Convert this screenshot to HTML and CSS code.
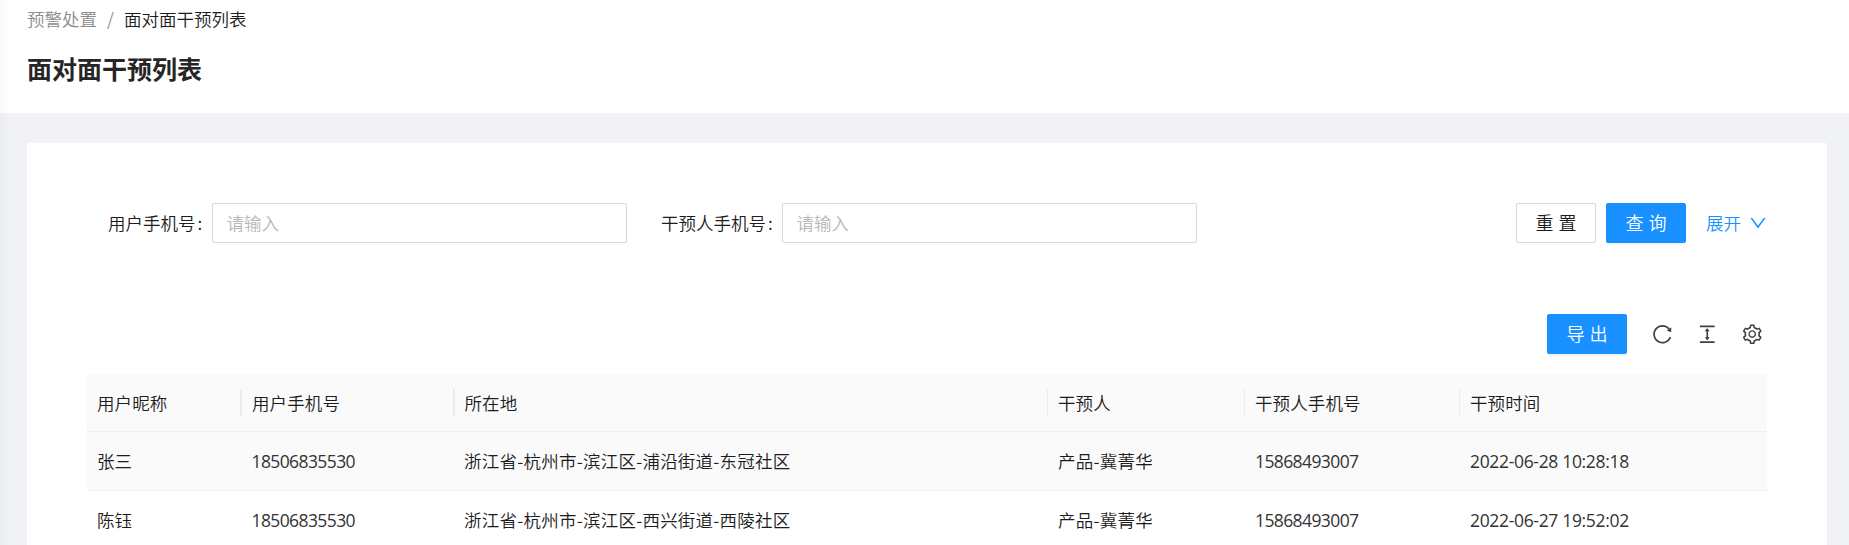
FILE: index.html
```html
<!DOCTYPE html>
<html lang="zh-CN">
<head>
<meta charset="utf-8">
<title>面对面干预列表</title>
<link rel="stylesheet" href="styles.css">
</head>
<body>
<header class="page-header">
  <nav class="breadcrumb"><span class="crumb">预警处置</span><span class="slash">/</span><span class="current">面对面干预列表</span></nav>
  <h1 class="title">面对面干预列表</h1>
</header>
<main class="card">
  <form class="search">
    <label class="label label-first" for="phone">用户手机号<span class="colon">:</span></label>
    <input class="input" id="phone" type="text" placeholder="请输入">
    <label class="label label-second" for="helper">干预人手机号<span class="colon">:</span></label>
    <input class="input" id="helper" type="text" placeholder="请输入">
    <div class="actions">
      <button class="btn" type="button"><span class="btn-text">重置</span></button>
      <button class="btn primary" type="button"><span class="btn-text">查询</span></button>
      <a class="expand">展开<svg class="down" viewBox="0 0 1024 1024"><path d="M884 256h-75c-5.1 0-9.9 2.5-12.9 6.6L512 654.2 227.9 262.6c-3-4.1-7.8-6.6-12.9-6.6h-75c-6.5 0-10.3 7.4-6.5 12.7l352.6 486.1c12.8 17.6 39 17.6 51.7 0l352.6-486.1c3.9-5.3.1-12.7-6.4-12.7z"/></svg></a>
    </div>
  </form>
  <div class="toolbar">
    <button class="btn primary" type="button"><span class="btn-text">导出</span></button>
    <div class="tools">
      <svg class="icon" viewBox="0 0 1024 1024"><path d="M909.1 209.3l-56.4 44.1C775.8 155.1 656.2 92 521.9 92 290 92 102.3 279.5 102 511.5 101.7 743.7 289.8 932 521.9 932c181.3 0 335.8-115 394.6-276.1 1.5-4.2-.7-8.9-4.9-10.3l-56.7-19.5a8 8 0 00-10.1 4.8c-1.8 5-3.8 10-5.9 14.9-17.3 41-42.1 77.8-73.7 109.4A344.77 344.77 0 01655.9 829c-42.3 17.9-87.4 27-133.8 27-46.5 0-91.5-9.1-133.8-27A341.5 341.5 0 01279 755.2a342.16 342.16 0 01-73.7-109.4c-17.9-42.4-27-87.4-27-133.9s9.1-91.5 27-133.9c17.3-41 42.1-77.8 73.7-109.4 31.6-31.6 68.4-56.4 109.3-73.8 42.3-17.9 87.4-27 133.8-27 46.5 0 91.5 9.1 133.8 27a341.5 341.5 0 01109.3 73.8c9.9 9.9 19.2 20.4 27.8 31.4l-60.2 47a8 8 0 003 14.1l175.6 43c5 1.2 9.9-2.6 9.9-7.7l.8-180.9c-.1-6.6-7.8-10.3-13-6.2z"/></svg>
      <svg class="icon" viewBox="0 0 1024 1024"><path d="M840 836H184c-4.4 0-8 3.6-8 8v60c0 4.4 3.6 8 8 8h656c4.4 0 8-3.6 8-8v-60c0-4.4-3.6-8-8-8zm0-724H184c-4.4 0-8 3.6-8 8v60c0 4.4 3.6 8 8 8h656c4.4 0 8-3.6 8-8v-60c0-4.4-3.6-8-8-8zM610.8 378c6 0 9.4-7 5.7-11.7L515.7 238.7a7.14 7.14 0 00-11.3 0L403.6 366.3a7.23 7.23 0 005.7 11.7H476v268h-62.8c-6 0-9.4 7-5.7 11.7l100.8 127.5c2.9 3.7 8.5 3.7 11.3 0l100.8-127.5c3.7-4.7.4-11.7-5.7-11.7H548V378h62.8z"/></svg>
      <svg class="icon" viewBox="0 0 1024 1024"><path d="M924.8 625.7l-65.5-56c3.1-19 4.7-38.4 4.7-57.8s-1.6-38.8-4.7-57.8l65.5-56a32.03 32.03 0 009.3-35.2l-.9-2.6a443.74 443.74 0 00-79.7-137.9l-1.8-2.1a32.12 32.12 0 00-35.1-9.5l-81.3 28.9c-30-24.6-63.5-44-99.7-57.6l-15.7-85a32.05 32.05 0 00-25.8-25.7l-2.7-.5c-52.1-9.4-106.9-9.4-159 0l-2.7.5a32.05 32.05 0 00-25.8 25.7l-15.8 85.4a351.86 351.86 0 00-99 57.4l-81.9-29.1a32 32 0 00-35.1 9.5l-1.8 2.1a446.02 446.02 0 00-79.7 137.9l-.9 2.6c-4.5 12.5-.8 26.5 9.3 35.2l66.3 56.6c-3.1 18.8-4.6 38-4.6 57.1 0 19.2 1.5 38.4 4.6 57.1L99 625.5a32.03 32.03 0 00-9.3 35.2l.9 2.6c18.1 50.4 44.9 96.9 79.7 137.9l1.8 2.1a32.12 32.12 0 0035.1 9.5l81.9-29.1c29.8 24.5 63.1 43.9 99 57.4l15.8 85.4a32.05 32.05 0 0025.8 25.7l2.7.5a449.4 449.4 0 00159 0l2.7-.5a32.05 32.05 0 0025.8-25.7l15.7-85a350 350 0 0099.7-57.6l81.3 28.9a32 32 0 0035.1-9.5l1.8-2.1c34.8-41.1 61.6-87.5 79.7-137.9l.9-2.6c4.5-12.3.8-26.3-9.3-35zM788.3 465.9c2.5 15.1 3.8 30.6 3.8 46.1s-1.3 31-3.8 46.1l-6.6 40.1 74.7 63.9a370.03 370.03 0 01-42.6 73.6L721 702.8l-31.4 25.8c-23.9 19.6-50.5 35-79.3 45.8l-38.1 14.3-17.9 97a377.5 377.5 0 01-85 0l-17.9-97.2-37.8-14.5c-28.5-10.8-55-26.2-78.7-45.7l-31.4-25.9-93.4 33.2c-17-22.9-31.2-47.6-42.6-73.6l75.5-64.5-6.5-40c-2.4-14.9-3.7-30.3-3.7-45.5 0-15.3 1.2-30.6 3.7-45.5l6.5-40-75.5-64.5c11.3-26.1 25.6-50.7 42.6-73.6l93.4 33.2 31.4-25.9c23.7-19.5 50.2-34.9 78.7-45.7l37.9-14.3 17.9-97.2c28.1-3.2 56.8-3.2 85 0l17.9 97 38.1 14.3c28.7 10.8 55.4 26.2 79.3 45.8l31.4 25.8 92.8-32.9c17 22.9 31.2 47.6 42.6 73.6L781.8 426l6.5 39.9zM512 326c-97.2 0-176 78.8-176 176s78.8 176 176 176 176-78.8 176-176-78.8-176-176-176zm79.2 255.2A111.6 111.6 0 01512 614c-29.9 0-58-11.7-79.2-32.8A111.6 111.6 0 01400 502c0-29.9 11.7-58 32.8-79.2C454 401.6 482.1 390 512 390c29.9 0 58 11.6 79.2 32.8A111.6 111.6 0 01624 502c0 29.9-11.7 58-32.8 79.2z"/></svg>
    </div>
  </div>
  <div class="table">
    <div class="row head"><span class="cell">用户昵称</span><span class="cell wide-sep">用户手机号</span><span class="cell wide-sep">所在地</span><span class="cell">干预人</span><span class="cell">干预人手机号</span><span class="cell">干预时间</span></div>
    <div class="row hover"><span class="cell">张三</span><span class="cell num">18506835530</span><span class="cell mixed">浙江省-杭州市-滨江区-浦沿街道-东冠社区</span><span class="cell mixed">产品-冀菁华</span><span class="cell num">15868493007</span><span class="cell num date">2022-06-28 10:28:18</span></div>
    <div class="row"><span class="cell">陈钰</span><span class="cell num">18506835530</span><span class="cell mixed">浙江省-杭州市-滨江区-西兴街道-西陵社区</span><span class="cell mixed">产品-冀菁华</span><span class="cell num">15868493007</span><span class="cell num date">2022-06-27 19:52:02</span></div>
  </div>
</main>
<div class="edge-shadow"></div>
</body>
</html>
```
FILE: styles.css
```css
* { box-sizing: border-box; }
body {
  margin: 0;
  height: 545px;
  overflow: hidden;
  background: #f0f2f5;
  color: #1c1c1c;
  font: 350 17.5px/27.5px "Noto Sans CJK SC", sans-serif;
}
.page-header { height: 113px; padding: 5px 27px 0; background: #fff; }
.breadcrumb { display: flex; height: 28px; }
.crumb, .slash { color: #8c8c8c; }
.slash { width: 27px; text-align: center; }
.title { margin: 15px 0 0; color: #262626; font-size: 25px; line-height: 40px; font-weight: 700; }
.card { margin: 30px 22px 0 27px; height: 420px; padding: 60px 60px 0; background: #fff; border-radius: 2px; }
.search { display: flex; align-items: center; height: 40px; }
.label { display: flex; flex: none; }
.label-first { width: 125px; padding-left: 21px; }
.label-second { width: 155px; padding-left: 34px; }
.colon { margin-left: 2px; }
.input {
  width: 415px; height: 40px; padding: 0 13.5px 1px; flex: none;
  border: 1px solid #d9d9d9; border-radius: 2px; background: #fff;
  font: inherit; color: inherit;
}
.input::placeholder { color: #b8b8b8; opacity: 1; }
.actions { display: flex; align-items: center; gap: 10px; margin: 0 -1px 0 auto; }
.btn {
  display: flex; align-items: center; justify-content: center;
  width: 80px; height: 40px; padding: 0;
  border: 1px solid #d9d9d9; border-radius: 2px; background: #fff;
  box-shadow: 0 2px 0 rgba(0, 0, 0, .015);
  color: #1c1c1c; font: inherit;
}
.btn-text { font-size: 18px; letter-spacing: 5px; margin-right: -5px; }
.primary { border-color: #1890ff; background: #1890ff; color: #fff; box-shadow: 0 2px 0 rgba(0, 0, 0, .045); }
.expand { display: flex; align-items: center; margin-left: 10px; color: #1890ff; }
.down { width: 20px; height: 20px; margin-left: 7px; fill: currentColor; }
.toolbar { display: flex; align-items: center; justify-content: flex-end; height: 40px; margin-top: 71px; padding-right: 3.75px; }
.tools { display: flex; gap: 22.5px; margin-left: 23.75px; }
.toolbar .btn { margin-left: auto; }
.icon { width: 22.5px; height: 22.5px; fill: #404040; }
.table { margin-top: 20px; }
.row { display: grid; grid-template-columns: 154.5px 212.5px 594px 197px 215px 1fr; align-items: center; height: 59px; border-bottom: 1px solid #f0f0f0; }
.cell { padding-left: 10px; white-space: nowrap; letter-spacing: .12px; }
.head { height: 58px; background: #fafafa; border-radius: 2px 2px 0 0; }
.head .cell + .cell { border-left: 1px solid #ebebeb; margin-left: -1px; }
.head .wide-sep.cell { border-left-width: 2px; margin-left: -1.5px; }
.hover { background: #fafafa; }
.num { padding-top: 1px; color: #333; font-family: "Open Sans", "Noto Sans", sans-serif; font-weight: 400; letter-spacing: -.6px; }
.date { letter-spacing: -.33px; }
.mixed { letter-spacing: .24px; }
.edge-shadow { position: absolute; top: 0; left: 0; width: 10px; height: 545px; background: linear-gradient(90deg, rgba(0, 21, 41, .025), transparent); }
```
